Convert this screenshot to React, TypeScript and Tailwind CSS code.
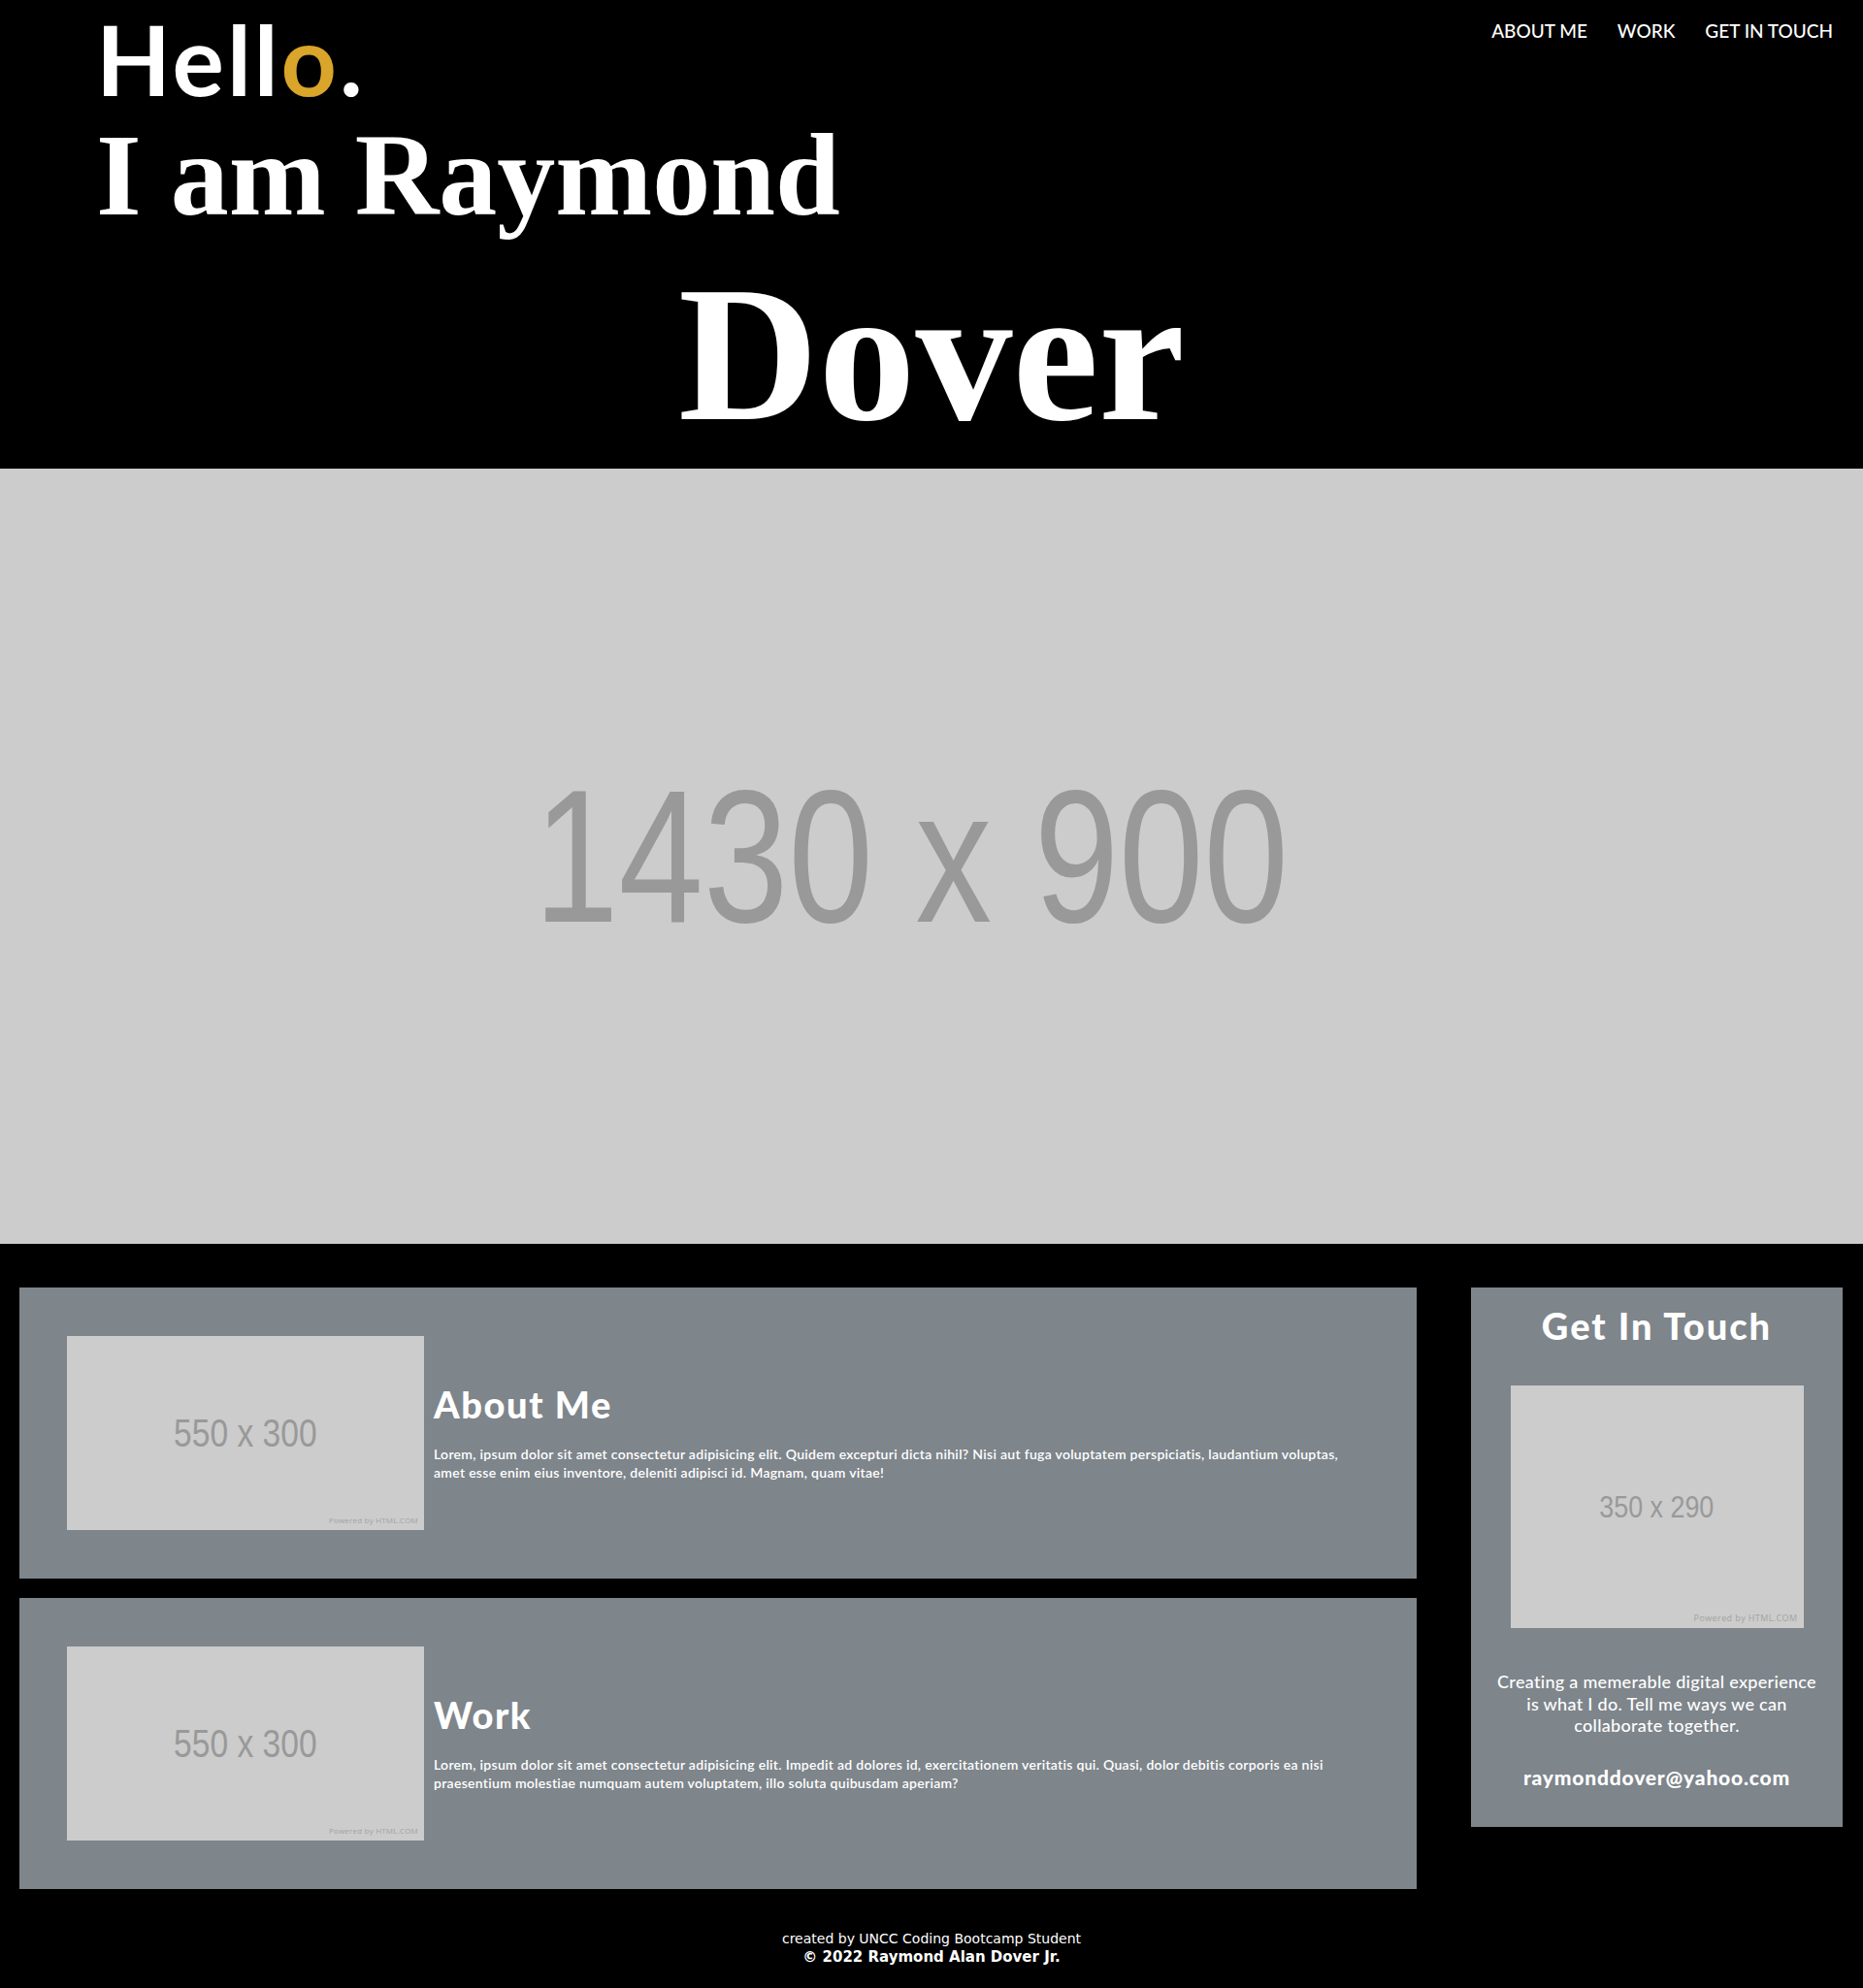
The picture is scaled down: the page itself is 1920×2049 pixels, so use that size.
import React from "react";

const sans = "font-['Lato','Open_Sans',sans-serif]";

function Placeholder({ label, className, textClass, credit }: { label: string; className: string; textClass: string; credit: string }) {
  return (
    <div className={`relative flex items-center justify-center bg-[#cccccc] shrink-0 ${className}`}>
      <span className={`font-['Liberation_Sans',Arial,sans-serif] text-[#999999] scale-x-[0.84] whitespace-nowrap ${textClass}`}>{label}</span>
      <span className={`absolute bottom-[4px] right-[6px] font-['Open_Sans',sans-serif] text-[#a3a3a3] ${credit}`}>Powered by HTML.COM</span>
    </div>
  );
}

function InfoCard({ title, text }: { title: string; text: string }) {
  return (
    <section className="flex items-center bg-[#7e858b] pl-[49px] py-[50px]">
      <Placeholder label="550 x 300" className="w-[368px] h-[200px]" textClass="text-[40px] leading-none" credit="text-[8px] tracking-[0.2px]" />
      <div className="ml-[10px] w-[950px] text-white">
        <h2 className={`${sans} font-black text-[38px] leading-[38px] tracking-[1.6px]`}>{title}</h2>
        <p className={`${sans} font-semibold text-[14px] leading-[19px] tracking-[0.3px] mt-[23px]`}>{text}</p>
      </div>
    </section>
  );
}

export default function App() {
  return (
    <div className="min-h-screen bg-black text-white">
      <header className="pb-[18px]">
        <div className="flex items-start justify-between">
          <h1 className={`${sans} font-bold text-[100px] leading-[120px] pl-[99px] tracking-[3px]`}>
            Hell<span className="text-[#d9a52a]">o</span>.
          </h1>
          <nav className={`${sans} flex gap-[31px] pr-[31px] pt-[22px] text-[19px] leading-[20px] font-medium`}>
            <a href="#about">ABOUT ME</a>
            <a href="#work">WORK</a>
            <a href="#contact">GET IN TOUCH</a>
          </nav>
        </div>
        <h2 className="font-['Liberation_Serif','Times_New_Roman',serif] font-bold text-[120px] leading-[120px] pl-[99px] mt-[1px]">
          I am Raymond
        </h2>
        <h2 className="font-['Liberation_Serif','Times_New_Roman',serif] font-bold text-[200px] leading-[200px] text-center mt-[24px]">
          Dover
        </h2>
      </header>

      <div className="flex h-[799px] items-center justify-center bg-[#cccccc] pr-[42px]">
        <span className="font-['Liberation_Sans',Arial,sans-serif] text-[194px] leading-none text-[#999999] scale-x-[0.81] whitespace-nowrap">1430 x 900</span>
      </div>

      <main className="flex items-start gap-[56px] pl-[20px] pr-[21px] pt-[45px]">
        <div className="flex w-[1440px] flex-col gap-[20px]">
          <InfoCard
            title="About Me"
            text="Lorem, ipsum dolor sit amet consectetur adipisicing elit. Quidem excepturi dicta nihil? Nisi aut fuga voluptatem perspiciatis, laudantium voluptas, amet esse enim eius inventore, deleniti adipisci id. Magnam, quam vitae!"
          />
          <InfoCard
            title="Work"
            text="Lorem, ipsum dolor sit amet consectetur adipisicing elit. Impedit ad dolores id, exercitationem veritatis qui. Quasi, dolor debitis corporis ea nisi praesentium molestiae numquam autem voluptatem, illo soluta quibusdam aperiam?"
          />
        </div>
        <aside className="flex w-[383px] flex-col items-center bg-[#7e858b] pt-[20px] pb-[39px] text-center">
          <h2 className={`${sans} font-black text-[38px] leading-[38px] tracking-[2px]`}>Get In Touch</h2>
          <Placeholder label="350 x 290" className="w-[302px] h-[250px] mt-[43px]" textClass="text-[32px] leading-none" credit="text-[9px] tracking-[0.4px]" />
          <p className={`${sans} font-medium text-[18px] leading-[22.5px] tracking-[0.3px] mt-[44px] px-[26px]`}>
            Creating a memerable digital experience is what I do. Tell me ways we can collaborate together.
          </p>
          <p className={`${sans} font-black text-[21px] leading-[24px] mt-[30px] tracking-[0.8px]`}>raymonddover@yahoo.com</p>
        </aside>
      </main>

      <footer className="pt-[42px] pb-[22px] text-center font-['DejaVu_Sans',Verdana,sans-serif] text-[14px] leading-[19px]">
        <p>created by UNCC Coding Bootcamp Student</p>
        <p className="font-bold text-[15px]">© 2022 Raymond Alan Dover Jr.</p>
      </footer>
    </div>
  );
}
